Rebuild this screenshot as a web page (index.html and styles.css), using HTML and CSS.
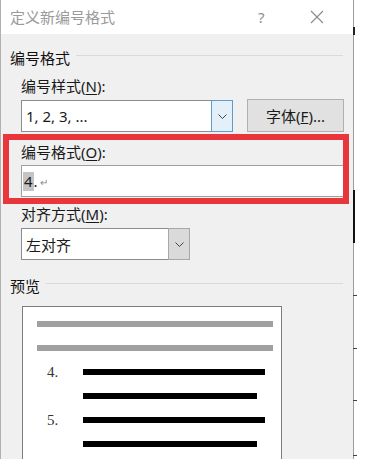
FILE: index.html
```html
<!DOCTYPE html>
<html lang="zh-CN">
<head>
<meta charset="utf-8">
<title>定义新编号格式</title>
<link rel="stylesheet" href="styles.css">
</head>
<body>
<div class="page">
  <div class="dialog">
    <div class="titlebar">
      <span class="title">定义新编号格式</span>
      <span class="help">?</span>
      <svg class="close" width="14" height="14" viewBox="0 0 14 14"><path d="M1 1L13 13M13 1L1 13" stroke="#8a8a8a" stroke-width="1.1" fill="none"/></svg>
    </div>
    <div class="content">
      <div class="group-head"><span>编号格式</span></div>
      <div class="label">编号样式(<u>N</u>):</div>
      <div class="row">
        <div class="select select-wide">
          <span class="select-text">1, 2, 3, ...</span>
          <span class="drop drop-hot"><svg width="9" height="5" viewBox="0 0 9 5"><path d="M0.5 0.5L4.5 4.5L8.5 0.5" stroke="#444" fill="none"/></svg></span>
        </div>
        <div class="button">字体(<u>F</u>)...</div>
      </div>
      <div class="highlight">
        <div class="label label-in">编号格式(<u>O</u>):</div>
        <div class="input"><span class="sel">4</span>.<span class="para">↵</span></div>
      </div>
      <div class="label">对齐方式(<u>M</u>):</div>
      <div class="row">
        <div class="select select-narrow">
          <span class="select-text">左对齐</span>
          <span class="drop"><svg width="9" height="5" viewBox="0 0 9 5"><path d="M0.5 0.5L4.5 4.5L8.5 0.5" stroke="#444" fill="none"/></svg></span>
        </div>
      </div>
      <div class="group-head group-preview"><span>预览</span></div>
      <div class="preview">
        <div class="prow"><span class="bar bar-gray"></span></div>
        <div class="prow"><span class="bar bar-gray"></span></div>
        <div class="prow"><span class="num">4.</span><span class="bar bar-long"></span></div>
        <div class="prow"><span class="num"></span><span class="bar bar-short"></span></div>
        <div class="prow"><span class="num">5.</span><span class="bar bar-long"></span></div>
        <div class="prow"><span class="num"></span><span class="bar bar-short"></span></div>
        <div class="prow"><span class="num">6.</span><span class="bar bar-long"></span></div>
      </div>
    </div>
  </div>
  <div class="outside">
    <span class="mark mark-a"></span>
    <span class="mark mark-b"></span>
    <span class="tick tick-1"></span>
    <span class="tick tick-2"></span>
    <span class="tick tick-3"></span>
    <span class="tick tick-4"></span>
  </div>
</div>
</body>
</html>
```

FILE: styles.css
```css
html, body {
  margin: 0;
  padding: 0;
  background: #ffffff;
}
body {
  font-family: "Noto Sans", "Noto Sans CJK SC", sans-serif;
  font-size: 15px;
  color: #1a1a1a;
}
.page {
  display: flex;
  width: 365px;
  height: 459px;
  overflow: hidden;
}
.dialog {
  width: 352px;
  height: 459px;
  border-left: 1px solid #b0b0b0;
  border-right: 1px solid #9c9c9c;
  display: flex;
  flex-direction: column;
  background: #f0f0f0;
}
.titlebar {
  height: 34px;
  flex: none;
  background: #ffffff;
  display: flex;
  align-items: center;
  padding-left: 9px;
}
.title {
  font-family: "Noto Sans CJK SC", sans-serif;
  font-size: 15px;
  color: #9a9a9a;
  line-height: 34px;
  width: 248px;
}
.help {
  font-size: 15px;
  color: #8c8c8c;
  width: 52px;
}
.close {
  display: block;
}
.content {
  flex: 1;
  display: flex;
  flex-direction: column;
  padding-top: 12px;
  min-height: 0;
}
.group-head {
  display: flex;
  align-items: center;
  margin-left: 9px;
  margin-right: 10px;
  height: 22px;
  font-family: "Noto Sans CJK SC", sans-serif;
  font-size: 15px;
  color: #111;
}
.group-head::after {
  content: "";
  flex: 1;
  border-top: 1px solid #dadada;
  margin-left: 6px;
  margin-top: -4px;
}
.label {
  margin-top: 8px;
  padding-left: 20px;
  height: 20px;
  line-height: 20px;
  font-size: 15px;
  color: #1a1a1a;
}
.label u {
  text-decoration: underline;
  text-underline-offset: 2px;
}
.row {
  display: flex;
  margin-top: 4px;
  margin-left: 20px;
  height: 32px;
}
.select {
  box-sizing: border-box;
  height: 32px;
  background: #ffffff;
  border: 1px solid #8c8c8c;
  display: flex;
  align-items: center;
}
.select-wide {
  width: 212px;
}
.select-narrow {
  width: 169px;
  height: 32px;
}
.select-text {
  flex: 1;
  padding-left: 4px;
  font-size: 15px;
  color: #1a1a1a;
}
.drop {
  box-sizing: border-box;
  align-self: stretch;
  width: 22px;
  margin: -1px -1px -1px 0;
  background: #dadada;
  border: 1px solid #a8a8a8;
  display: flex;
  align-items: center;
  justify-content: center;
}
.drop-hot {
  background: #e3f0fa;
  border-color: #5f9ccc;
}
.button {
  box-sizing: border-box;
  width: 97px;
  height: 33px;
  margin-top: -1px;
  margin-left: 14px;
  background: #e1e1e1;
  border: 1px solid #b0b0b0;
  display: flex;
  align-items: center;
  justify-content: center;
  font-size: 15px;
  color: #1a1a1a;
}
.highlight {
  box-sizing: border-box;
  width: 346px;
  margin-left: 2px;
  margin-top: 2px;
  border: 6px solid #e8363c;
  padding: 2px 0 1px 12px;
}
.label-in {
  margin-top: 0;
  padding-left: 0;
}
.input {
  box-sizing: border-box;
  margin-top: 3px;
  height: 32px;
  background: #ffffff;
  border: 1px solid #a0a0a0;
  border-right: none;
  display: flex;
  align-items: center;
  padding-left: 1px;
  font-size: 15px;
  color: #1a1a1a;
}
.sel {
  background: #c4c4c4;
  padding: 0 1px;
  line-height: 19px;
}
.para {
  font-size: 10px;
  color: #8a8a8a;
  margin-left: 2px;
  margin-top: 2px;
}
.highlight + .label {
  margin-top: 0;
}
.group-preview {
  margin-top: 14px;
}
.preview {
  box-sizing: border-box;
  margin-top: 10px;
  margin-left: 21px;
  width: 260px;
  flex: 1;
  min-height: 0;
  overflow: hidden;
  background: #ffffff;
  border: 1px solid #7c7c7c;
  border-bottom: none;
  padding: 5px 0 0 14px;
}
.prow {
  height: 24px;
  display: flex;
  align-items: center;
}
.num {
  width: 46px;
  box-sizing: border-box;
  padding-left: 10px;
  font-family: "Liberation Serif", serif;
  font-size: 15px;
  color: #333;
  line-height: 24px;
}
.bar {
  display: block;
  height: 6px;
}
.bar-gray {
  width: 236px;
  background: #a0a0a0;
}
.bar-long {
  width: 182px;
  background: #000000;
}
.bar-short {
  width: 174px;
  background: #000000;
}
.outside {
  flex: 1;
  display: flex;
  flex-direction: column;
  align-items: flex-start;
  margin-left: -1px;
}
.mark {
  display: block;
  width: 2px;
  background: #222;
}
.mark-a {
  margin-top: 27px;
  height: 8px;
}
.mark-b {
  margin-top: 155px;
  height: 53px;
  background: #111;
}
.tick {
  display: block;
  width: 4px;
  height: 1px;
  background: #444;
}
.tick-1 { margin-top: 52px; }
.tick-2 { margin-top: 52px; }
.tick-3 { margin-top: 51px; }
.tick-4 { margin-top: 54px; }
```
